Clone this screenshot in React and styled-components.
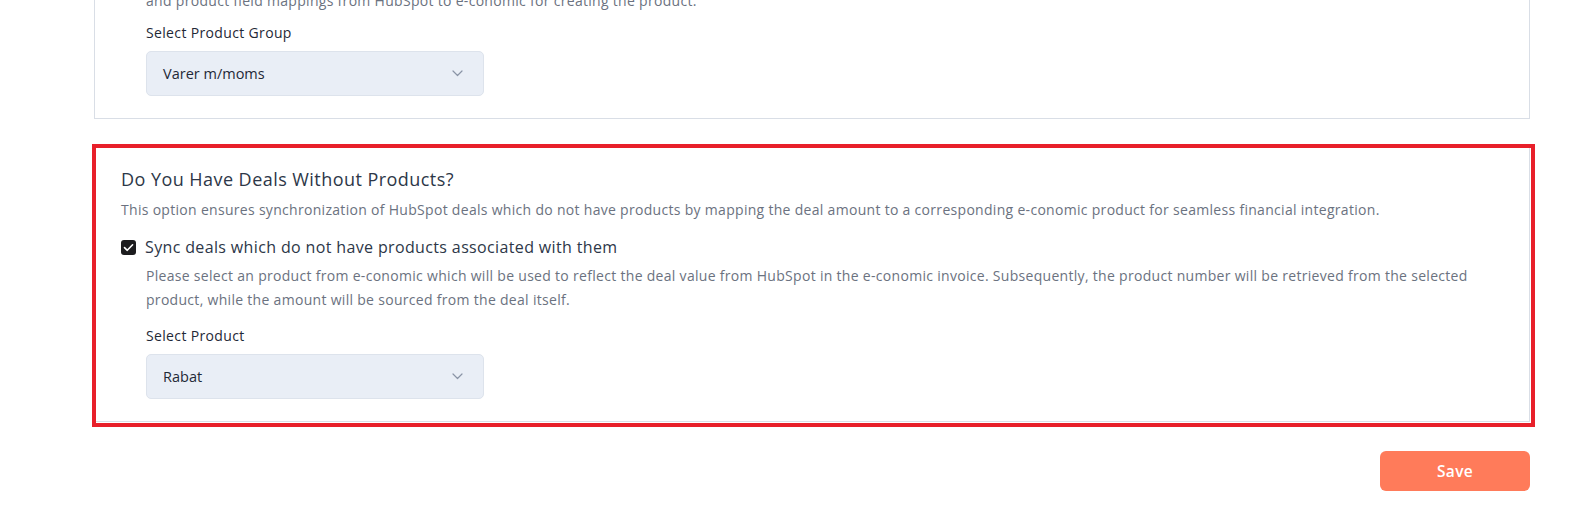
import React from 'react'
import styled, { createGlobalStyle } from 'styled-components'

const GlobalStyle = createGlobalStyle`
  html, body {
    margin: 0;
    padding: 0;
    background: #ffffff;
  }
  body {
    font-family: "Open Sans", "Noto Sans", sans-serif;
    color: #2d3748;
    overflow: hidden;
  }
`

const Page = styled.div`
  width: 1573px;
  height: 511px;
  overflow: hidden;
  padding-left: 94px;
  padding-right: 43px;
  box-sizing: border-box;
`

const Column = styled.div`
  display: flex;
  flex-direction: column;
  gap: 27px;
  margin-top: ${p => p.$offset || 0}px;
`

const Card = styled.section`
  position: relative;
  border: 1px solid #d9dee6;
  background: #fff;
  padding: ${p => p.$pad || '20px 26px 22px 26px'};
`

const Highlight = styled.div`
  position: absolute;
  left: -3px;
  top: -3px;
  right: -6px;
  bottom: -6px;
  border: 4px solid #e8202a;
  pointer-events: none;
`

const Title = styled.h3`
  margin: 0;
  font-size: 18px;
  line-height: 24px;
  font-weight: 500;
  letter-spacing: 0.45px;
  color: #2d3748;
`

const Desc = styled.p`
  margin: ${p => p.$m || '7px 0 0 0'};
  font-size: 14px;
  line-height: 24px;
  letter-spacing: 0.3px;
  color: #6b7280;
`

const Indent = styled.div`
  padding-left: 25px;
`

const CheckRow = styled.label`
  display: flex;
  align-items: center;
  gap: 9px;
  margin-top: 13px;
  font-size: 16px;
  line-height: 24px;
  letter-spacing: 0.36px;
  color: #2d3748;
`

const Box = styled.span`
  width: 15px;
  height: 15px;
  border-radius: 3px;
  background: #1c1c1e;
  display: flex;
  align-items: center;
  justify-content: center;
  flex-shrink: 0;
`

const Field = styled.div`
  margin-top: ${p => p.$mt || 0}px;
`

const Label = styled.div`
  font-size: 14px;
  line-height: 20px;
  letter-spacing: 0.35px;
  color: #1f2937;
  margin-bottom: 8px;
`

const Select = styled.div`
  width: 338px;
  height: 45px;
  box-sizing: border-box;
  background: #e9eef6;
  border: 1px solid #dde3ec;
  border-radius: 5px;
  display: flex;
  align-items: center;
  justify-content: space-between;
  padding: 0 20px 0 16px;
  font-size: 14.5px;
  color: #1f2937;
`

const Footer = styled.div`
  display: flex;
  justify-content: flex-end;
  margin-top: 29px;
`

const SaveButton = styled.button`
  width: 150px;
  height: 40px;
  border: none;
  border-radius: 6px;
  background: #ff7b5a;
  color: #fff;
  font-family: inherit;
  font-size: 15.5px;
  font-weight: 600;
  letter-spacing: 0.3px;
  cursor: pointer;
`

const Chevron = () => (
  <svg width="11" height="7" viewBox="0 0 11 7" fill="none">
    <path d="M1 1l4.5 4.5L10 1" stroke="#8a94a6" strokeWidth="1.2" strokeLinecap="round" strokeLinejoin="round" />
  </svg>
)

const Check = () => (
  <svg width="11" height="9" viewBox="0 0 11 9" fill="none">
    <path d="M1.5 4.6l2.8 2.7L9.6 1.8" stroke="#fff" strokeWidth="1.6" strokeLinecap="round" strokeLinejoin="round" />
  </svg>
)

export default function App() {
  return (
    <>
      <GlobalStyle />
      <Page>
        <Column $offset={-12}>
          <Card $pad="0 26px 22px 26px">
            <Indent>
              <Desc $m="0">and product field mappings from HubSpot to e-conomic for creating the product.</Desc>
              <Field $mt={10}>
                <Label>Select Product Group</Label>
                <Select>
                  <span>Varer m/moms</span>
                  <Chevron />
                </Select>
              </Field>
            </Indent>
          </Card>

          <Card>
            <Highlight />
            <Title>Do You Have Deals Without Products?</Title>
            <Desc>
              This option ensures synchronization of HubSpot deals which do not have products by mapping the deal amount to a corresponding e-conomic product for seamless financial integration.
            </Desc>
            <CheckRow>
              <Box><Check /></Box>
              Sync deals which do not have products associated with them
            </CheckRow>
            <Indent>
              <Desc $m="5px 0 0 0">
                Please select an product from e-conomic which will be used to reflect the deal value from HubSpot in the e-conomic invoice. Subsequently, the product number will be retrieved from the selected product, while the amount will be sourced from the deal itself.
              </Desc>
              <Field $mt={14}>
                <Label>Select Product</Label>
                <Select>
                  <span>Rabat</span>
                  <Chevron />
                </Select>
              </Field>
            </Indent>
          </Card>
        </Column>
        <Footer>
          <SaveButton>Save</SaveButton>
        </Footer>
      </Page>
    </>
  )
}
